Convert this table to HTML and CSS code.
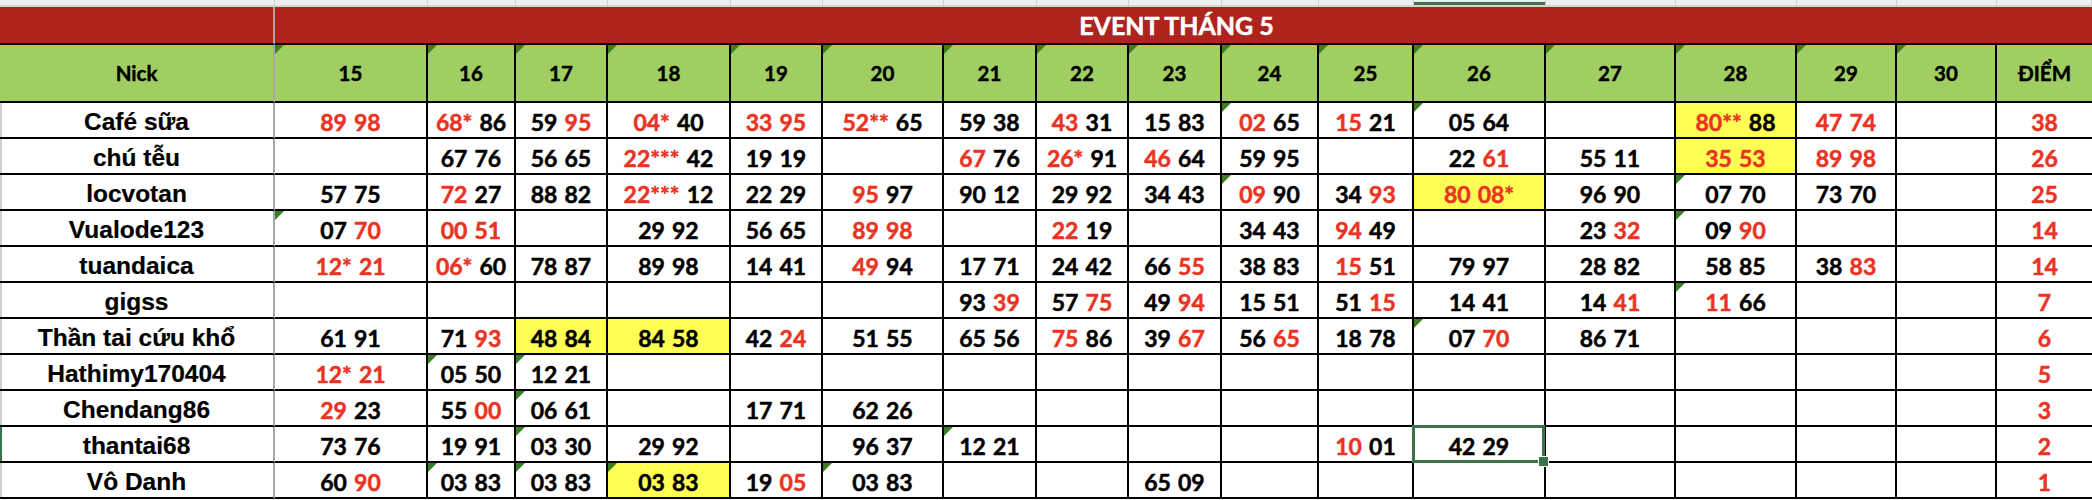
FILE: index.html
```html
<!DOCTYPE html>
<html lang="vi">
<head>
<meta charset="utf-8">
<title>EVENT THÁNG 5</title>
<link rel="stylesheet" href="styles.css">
</head>
<body>
<div class="strip">
  <div></div><div></div><div></div><div></div><div></div><div></div><div></div><div></div><div></div>
  <div></div><div></div><div></div><div class="on"></div><div></div><div></div><div></div><div></div><div></div>
</div>
<div class="sheet">
  <div class="banner-l"></div>
  <div class="banner">EVENT THÁNG 5</div>

  <div class="h nick-h">Nick</div>
  <div class="h t">15</div><div class="h t">16</div><div class="h t">17</div><div class="h t">18</div>
  <div class="h t">19</div><div class="h t">20</div><div class="h t">21</div><div class="h t">22</div>
  <div class="h t">23</div><div class="h t">24</div><div class="h t">25</div><div class="h t">26</div>
  <div class="h t">27</div><div class="h t">28</div><div class="h t">29</div><div class="h t">30</div>
  <div class="h last">ĐIỂM</div>

  <div class="nick">Café sữa</div>
  <div class="c"><span class="r">89 98</span></div>
  <div class="c"><span class="r">68*</span> 86</div>
  <div class="c">59 <span class="r">95</span></div>
  <div class="c"><span class="r">04*</span> 40</div>
  <div class="c"><span class="r">33 95</span></div>
  <div class="c"><span class="r">52**</span> 65</div>
  <div class="c">59 38</div>
  <div class="c"><span class="r">43</span> 31</div>
  <div class="c">15 83</div>
  <div class="c t"><span class="r">02</span> 65</div>
  <div class="c"><span class="r">15</span> 21</div>
  <div class="c t">05 64</div>
  <div class="c"></div>
  <div class="c y"><span class="r">80**</span> 88</div>
  <div class="c"><span class="r">47 74</span></div>
  <div class="c"></div>
  <div class="c pt">38</div>

  <div class="nick">chú tễu</div>
  <div class="c"></div>
  <div class="c">67 76</div>
  <div class="c">56 65</div>
  <div class="c"><span class="r">22***</span> 42</div>
  <div class="c">19 19</div>
  <div class="c"></div>
  <div class="c"><span class="r">67</span> 76</div>
  <div class="c"><span class="r">26*</span> 91</div>
  <div class="c"><span class="r">46</span> 64</div>
  <div class="c">59 95</div>
  <div class="c"></div>
  <div class="c">22 <span class="r">61</span></div>
  <div class="c">55 11</div>
  <div class="c y"><span class="r">35 53</span></div>
  <div class="c"><span class="r">89 98</span></div>
  <div class="c"></div>
  <div class="c pt">26</div>

  <div class="nick">locvotan</div>
  <div class="c">57 75</div>
  <div class="c"><span class="r">72</span> 27</div>
  <div class="c">88 82</div>
  <div class="c"><span class="r">22***</span> 12</div>
  <div class="c">22 29</div>
  <div class="c"><span class="r">95</span> 97</div>
  <div class="c">90 12</div>
  <div class="c">29 92</div>
  <div class="c">34 43</div>
  <div class="c t"><span class="r">09</span> 90</div>
  <div class="c">34 <span class="r">93</span></div>
  <div class="c y"><span class="r">80 08*</span></div>
  <div class="c">96 90</div>
  <div class="c t">07 70</div>
  <div class="c">73 70</div>
  <div class="c"></div>
  <div class="c pt">25</div>

  <div class="nick">Vualode123</div>
  <div class="c t">07 <span class="r">70</span></div>
  <div class="c"><span class="r">00 51</span></div>
  <div class="c"></div>
  <div class="c">29 92</div>
  <div class="c">56 65</div>
  <div class="c"><span class="r">89 98</span></div>
  <div class="c"></div>
  <div class="c"><span class="r">22</span> 19</div>
  <div class="c"></div>
  <div class="c">34 43</div>
  <div class="c"><span class="r">94</span> 49</div>
  <div class="c"></div>
  <div class="c">23 <span class="r">32</span></div>
  <div class="c t">09 <span class="r">90</span></div>
  <div class="c"></div>
  <div class="c"></div>
  <div class="c pt">14</div>

  <div class="nick">tuandaica</div>
  <div class="c"><span class="r">12* 21</span></div>
  <div class="c"><span class="r">06*</span> 60</div>
  <div class="c">78 87</div>
  <div class="c">89 98</div>
  <div class="c">14 41</div>
  <div class="c"><span class="r">49</span> 94</div>
  <div class="c">17 71</div>
  <div class="c">24 42</div>
  <div class="c">66 <span class="r">55</span></div>
  <div class="c">38 83</div>
  <div class="c"><span class="r">15</span> 51</div>
  <div class="c">79 97</div>
  <div class="c">28 82</div>
  <div class="c">58 85</div>
  <div class="c">38 <span class="r">83</span></div>
  <div class="c"></div>
  <div class="c pt">14</div>

  <div class="nick">gigss</div>
  <div class="c"></div><div class="c"></div><div class="c"></div>
  <div class="c"></div><div class="c"></div><div class="c"></div>
  <div class="c">93 <span class="r">39</span></div>
  <div class="c">57 <span class="r">75</span></div>
  <div class="c">49 <span class="r">94</span></div>
  <div class="c">15 51</div>
  <div class="c">51 <span class="r">15</span></div>
  <div class="c">14 41</div>
  <div class="c">14 <span class="r">41</span></div>
  <div class="c t"><span class="r">11</span> 66</div>
  <div class="c"></div>
  <div class="c"></div>
  <div class="c pt">7</div>

  <div class="nick">Thần tai cứu khổ</div>
  <div class="c">61 91</div>
  <div class="c">71 <span class="r">93</span></div>
  <div class="c y">48 84</div>
  <div class="c y">84 58</div>
  <div class="c">42 <span class="r">24</span></div>
  <div class="c">51 55</div>
  <div class="c">65 56</div>
  <div class="c"><span class="r">75</span> 86</div>
  <div class="c">39 <span class="r">67</span></div>
  <div class="c">56 <span class="r">65</span></div>
  <div class="c">18 78</div>
  <div class="c t">07 <span class="r">70</span></div>
  <div class="c">86 71</div>
  <div class="c"></div><div class="c"></div><div class="c"></div>
  <div class="c pt">6</div>

  <div class="nick">Hathimy170404</div>
  <div class="c"><span class="r">12* 21</span></div>
  <div class="c t">05 50</div>
  <div class="c t">12 21</div>
  <div class="c"></div><div class="c"></div><div class="c"></div><div class="c"></div><div class="c"></div>
  <div class="c"></div><div class="c"></div><div class="c"></div><div class="c"></div><div class="c"></div>
  <div class="c"></div><div class="c"></div><div class="c"></div>
  <div class="c pt">5</div>

  <div class="nick">Chendang86</div>
  <div class="c"><span class="r">29</span> 23</div>
  <div class="c">55 <span class="r">00</span></div>
  <div class="c t">06 61</div>
  <div class="c"></div>
  <div class="c">17 71</div>
  <div class="c">62 26</div>
  <div class="c"></div><div class="c"></div><div class="c"></div><div class="c"></div><div class="c"></div>
  <div class="c"></div><div class="c"></div><div class="c"></div><div class="c"></div><div class="c"></div>
  <div class="c pt">3</div>

  <div class="nick cur">thantai68</div>
  <div class="c">73 76</div>
  <div class="c">19 91</div>
  <div class="c t">03 30</div>
  <div class="c">29 92</div>
  <div class="c"></div>
  <div class="c">96 37</div>
  <div class="c t">12 21</div>
  <div class="c"></div><div class="c"></div><div class="c"></div>
  <div class="c"><span class="r">10</span> 01</div>
  <div class="c sel">42 29</div>
  <div class="c"></div><div class="c"></div><div class="c"></div><div class="c"></div>
  <div class="c pt">2</div>

  <div class="nick">Vô Danh</div>
  <div class="c">60 <span class="r">90</span></div>
  <div class="c t">03 83</div>
  <div class="c t">03 83</div>
  <div class="c y t">03 83</div>
  <div class="c">19 <span class="r">05</span></div>
  <div class="c t">03 83</div>
  <div class="c"></div><div class="c"></div>
  <div class="c">65 09</div>
  <div class="c"></div><div class="c"></div><div class="c"></div><div class="c"></div>
  <div class="c"></div><div class="c"></div><div class="c"></div>
  <div class="c pt">1</div>
</div>
</body>
</html>
```

FILE: styles.css
```css
* {
  box-sizing: border-box;
  margin: 0;
  padding: 0;
}

:root {
  --cols: 275px 153px 88px 92px 123px 92px 121px 93px 92px 93px 97px 95px 132px 130px 121px 100px 100px 95px;
  --red: #ea3323;
  --frozen: #a8a8a8;
  --sel: #3b7448;
}

body {
  margin: 0;
  width: 2092px;
  height: 500px;
  overflow: hidden;
  background: #ffffff;
  font-family: Lato, "Liberation Sans", sans-serif;
  color: #000;
}

/* Excel column-header strip remnant */
.strip {
  display: grid;
  grid-template-columns: var(--cols);
  height: 7px;
}

.strip > div {
  background: #efefef;
  border-right: 1px solid #cfcfcf;
  border-bottom: 2px solid #d6d6d6;
}

.strip > .on {
  background: linear-gradient(to bottom, #efefef 0, #efefef 2px, var(--sel) 2px, var(--sel) 5px);
}

/* sheet */
.sheet {
  display: grid;
  grid-template-columns: var(--cols);
  grid-template-rows: 38px 58px repeat(11, 36px);
}

.sheet > div {
  position: relative;
  border-right: 2px solid #000;
  border-bottom: 2px solid #000;
  text-align: center;
  white-space: nowrap;
}

.sheet > .banner-l {
  background: #ae231b;
  border-right: 2px solid var(--frozen);
}

.sheet > .banner {
  grid-column: 2 / -1;
  background: #ae231b;
  border-right: 0;
  color: #fff;
  font-weight: 700;
  font-size: 25px;
  line-height: 36px;
  padding-right: 14px;
  -webkit-text-stroke: 0.5px #fff;
}

.sheet > .h {
  background: #a0ce63;
  font-weight: 700;
  font-size: 20.5px;
  line-height: 56px;
  -webkit-text-stroke: 0.45px #000;
}

.sheet > .nick-h {
  border-right-color: var(--frozen);
}

.sheet > .last {
  border-right: 0;
}

.sheet > .nick {
  font-family: "Liberation Sans", Arial, sans-serif;
  font-weight: 700;
  font-size: 24.5px;
  line-height: 30px;
  padding-top: 4px;
  border-right-color: var(--frozen);
  box-shadow: inset 2px 0 #d0d0d0;
  -webkit-text-stroke: 0.2px #000;
}

.sheet > .cur {
  box-shadow: inset 2px 0 var(--sel);
}

.sheet > .c {
  font-weight: 700;
  font-size: 23px;
  line-height: 29px;
  padding-top: 5px;
  word-spacing: 1.5px;
  -webkit-text-stroke: 0.5px #000;
}

.sheet > .pt {
  color: var(--red);
  -webkit-text-stroke-color: var(--red);
  border-right: 0;
}

.r {
  color: var(--red);
  -webkit-text-stroke-color: var(--red);
}

.sheet > .y {
  background: #fffe55;
}

.t::before {
  content: "";
  position: absolute;
  left: 0;
  top: 0;
  width: 0;
  height: 0;
  border-top: 9px solid #3b7d23;
  border-right: 9px solid transparent;
}

.sheet > .sel {
  z-index: 2;
}

.sel::after {
  content: "";
  position: absolute;
  left: -2px;
  top: -2px;
  right: -1px;
  bottom: -2px;
  border: 3px solid var(--sel);
}

.sel::before {
  content: "";
  position: absolute;
  right: -5px;
  bottom: -6px;
  width: 9px;
  height: 9px;
  background: var(--sel);
  border: 1px solid #fff;
  z-index: 3;
}
```
